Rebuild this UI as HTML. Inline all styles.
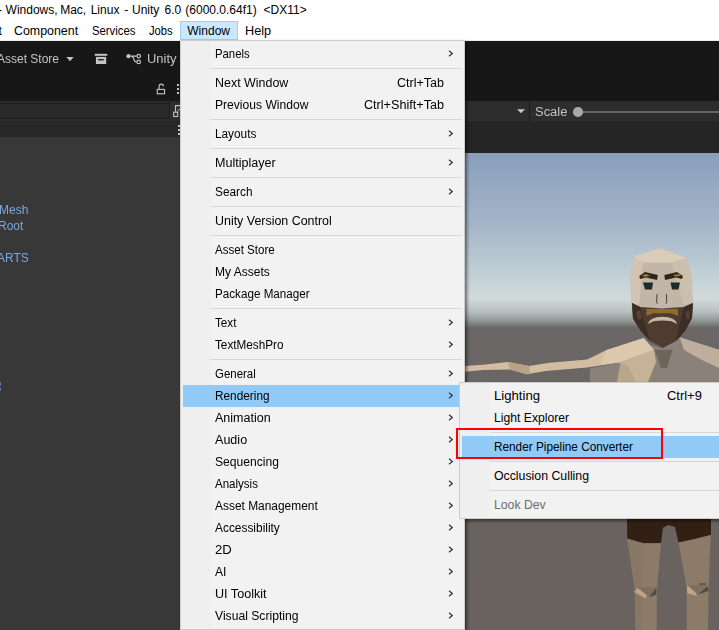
<!DOCTYPE html>
<html><head><meta charset="utf-8">
<style>
*{margin:0;padding:0;box-sizing:border-box}
html,body{width:719px;height:630px;overflow:hidden;background:#383838;font-family:"Liberation Sans",sans-serif;font-size:12px}
.a{position:absolute}
.t{position:absolute;white-space:nowrap;line-height:14px}
#title{left:0;top:0;width:719px;height:20px;background:#fff}
#mbar{left:0;top:20px;width:719px;height:21px;background:#fff;border-bottom:1px solid #ececec}
#tb{left:0;top:41px;width:719px;height:60px;background:#171717}
.menu{background:#f2f2f2;border:1px solid #cccccc;box-shadow:2px 2px 3px rgba(0,0,0,0.5)}
.it{position:absolute;height:22px;left:2px;right:2px}
.it .l{position:absolute;left:32px;top:4px;white-space:nowrap;line-height:14px;color:#000}
.it .r{position:absolute;top:4px;white-space:nowrap;line-height:14px;color:#000}
.it.hl{background:#91c9f7}
.it.dis .l{color:#6d6d6d}
.sep{position:absolute;height:1px;background:#d7d7d7}
.chev{position:absolute;right:9px;top:7px}
.ui{color:#c4c4c4;will-change:transform}
.blue{color:#7ea6dc;will-change:transform}
</style></head><body>
<div id="title" class="a">
    <div class="t" style="left:-2.0px;top:3px">-</div>
  <div class="t" style="left:5.6px;top:3px">Windows,</div>
  <div class="t" style="left:60.2px;top:3px">Mac,</div>
  <div class="t" style="left:90.7px;top:3px">Linux</div>
  <div class="t" style="left:124.2px;top:3px">-</div>
  <div class="t" style="left:132.0px;top:3px">Unity</div>
  <div class="t" style="left:164.6px;top:3px">6.0</div>
  <div class="t" style="left:185.3px;top:3px">(6000.0.64f1)</div>
  <div class="t" style="left:263.6px;top:3px">&lt;DX11&gt;</div>
</div>
<div id="mbar" class="a">
  <div class="t" style="left:-1.5px;top:4px">t</div>
  <div class="t" style="left:14.3px;top:4px;transform:scaleX(1.033);transform-origin:0 0">Component</div>
  <div class="t" style="left:92.3px;top:4px;transform:scaleX(0.942);transform-origin:0 0">Services</div>
  <div class="t" style="left:149.3px;top:4px;transform:scaleX(0.936);transform-origin:0 0">Jobs</div>
  <div class="a" style="left:180px;top:1px;width:58px;height:19px;background:#cce8ff;border:1px solid #99d1ff"></div>
  <div class="t" style="left:187.3px;top:4px">Window</div>
  <div class="t" style="left:244.7px;top:4px;transform:scaleX(1.056);transform-origin:0 0">Help</div>
</div>
<div id="tb" class="a">
  <div class="t ui" style="left:-3px;top:11px">Asset Store</div>
  <svg class="a" style="left:66px;top:16px" width="8" height="5"><path d="M0.3 0 H7.7 L4 4.3Z" fill="#c4c4c4"/></svg>
  <svg class="a" style="left:94px;top:12px" width="14" height="12">
    <rect x="0.8" y="0.8" width="12.5" height="2" fill="#c4c4c4"/>
    <rect x="1.9" y="3.9" width="10.3" height="7.1" fill="#c4c4c4"/>
    <rect x="4" y="6.1" width="5.8" height="1.3" fill="#191919"/>
  </svg>
  <svg class="a" style="left:124px;top:11px" width="18" height="13">
    <circle cx="4.5" cy="4.2" r="2.1" fill="#c4c4c4"/>
    <path d="M6.5 4.2 H12.6 M7.5 4.4 Q9.5 4.6 9.8 7 Q10.2 9.8 12.6 9.9" fill="none" stroke="#c4c4c4" stroke-width="1.2"/>
    <circle cx="14.7" cy="4.1" r="1.8" fill="none" stroke="#c4c4c4" stroke-width="1.2"/>
    <circle cx="14.7" cy="9.9" r="1.8" fill="none" stroke="#c4c4c4" stroke-width="1.2"/>
  </svg>
  <div class="t ui" style="left:147px;top:11px;transform:scaleX(1.077);transform-origin:0 0">Unity</div>
</div>
<!-- left panel -->
<svg class="a" style="left:156px;top:83px" width="10" height="12">
  <path d="M3.1 6 V3.6 Q3.1 1.1 5.3 1.1 Q7.4 1.1 7.5 3.2" fill="none" stroke="#c4c4c4" stroke-width="1.1"/>
  <rect x="1.25" y="6.4" width="7.3" height="4.4" fill="none" stroke="#c4c4c4" stroke-width="1.1"/>
</svg>
<div class="a" style="left:177px;top:84px;width:2px;height:2px;background:#c4c4c4"></div>
<div class="a" style="left:177px;top:88px;width:2px;height:2px;background:#c4c4c4"></div>
<div class="a" style="left:177px;top:92px;width:2px;height:2px;background:#c4c4c4"></div>
<div class="a" style="left:0;top:101px;width:180px;height:2px;background:#2a2a2a"></div>
<div class="a" style="left:0;top:103px;width:180px;height:1px;background:#1b1b1b"></div>
<div class="a" style="left:0;top:104px;width:169px;height:14px;background:#2a2a2a"></div>
<div class="a" style="left:169px;top:104px;width:1px;height:14px;background:#1e1e1e"></div>
<div class="a" style="left:170px;top:103px;width:10px;height:16px;background:#2e2e2e"></div>
<svg class="a" style="left:172px;top:104px" width="8" height="14">
  <rect x="1.7" y="8.2" width="4" height="4.3" fill="none" stroke="#c4c4c4" stroke-width="1.1"/>
  <path d="M3.5 7.8 V1.6 H8" fill="none" stroke="#c4c4c4" stroke-width="1.1"/>
  <path d="M5.5 7.5 L8 4.5" fill="none" stroke="#c4c4c4" stroke-width="1"/>
</svg>
<div class="a" style="left:0;top:118px;width:170px;height:1px;background:#202020"></div>
<div class="a" style="left:0;top:119px;width:180px;height:2px;background:#2c2c2c"></div>
<div class="a" style="left:0;top:121px;width:180px;height:16px;background:#282828"></div>
<div class="a" style="left:178px;top:125px;width:2px;height:2px;background:#c4c4c4"></div>
<div class="a" style="left:178px;top:129px;width:2px;height:2px;background:#c4c4c4"></div>
<div class="a" style="left:178px;top:133px;width:2px;height:2px;background:#c4c4c4"></div>
<div class="t blue" style="left:-1.3px;top:203px">Mesh</div>
<div class="t blue" style="left:-2.1px;top:219px">Root</div>
<div class="t blue" style="left:-2.8px;top:251px">ARTS</div>
<div class="a" style="left:0;top:382px;width:1px;height:4px;background:#5a78b0"></div>
<div class="a" style="left:0;top:388px;width:1px;height:3px;background:#5a78b0"></div>

<!-- scene view -->
<div class="a" style="left:465px;top:101px;width:254px;height:21px;background:#2d2d2d;border-bottom:1px solid #1b1b1b"></div>
<svg class="a" style="left:517px;top:109px" width="9" height="6"><path d="M0 0.3 H8 L4 4.3Z" fill="#c4c4c4"/></svg>
<div class="a" style="left:529px;top:101px;width:1px;height:20px;background:#1b1b1b"></div>
<div class="t ui" style="left:534.6px;top:105px;transform:scaleX(1.08);transform-origin:0 0">Scale</div>
<div class="a" style="left:578px;top:111px;width:141px;height:2px;background:#626262"></div>
<div class="a" style="left:573px;top:107px;width:9.5px;height:9.5px;border-radius:50%;background:#a8a8a8"></div>
<div class="a" style="left:465px;top:121px;width:254px;height:32px;background:#252525"></div>
<svg class="a" style="left:465px;top:153px" width="254" height="477" viewBox="465 153 254 477">
  <defs>
    <linearGradient id="sky" x1="0" y1="153" x2="0" y2="630" gradientUnits="userSpaceOnUse">
      <stop offset="0.0000" stop-color="#889fbc"/>
      <stop offset="0.1423" stop-color="#a3b4c7"/>
      <stop offset="0.2259" stop-color="#b8c8d2"/>
      <stop offset="0.2657" stop-color="#c5d2d8"/>
      <stop offset="0.3054" stop-color="#d0dad8"/>
      <stop offset="0.3326" stop-color="#b8c0c0"/>
      <stop offset="0.3515" stop-color="#909696"/>
      <stop offset="0.3630" stop-color="#747472"/>
      <stop offset="0.3661" stop-color="#6a6766"/>
      <stop offset="1.0000" stop-color="#69625e"/>
    </linearGradient>
  </defs>
  <rect x="465" y="153" width="254" height="477" fill="url(#sky)"/>
  <!-- arm -->
  <path d="M590 382 L590 368.6 L620.5 362.3 L652 345 L662 348 L679.7 337.2 L719 349.7 L719 382Z" fill="#8a8178"/>
  <path d="M465 365.9 L482.9 364.8 L507.9 362.1 L528.8 365.9 L549.6 362.7 L587.2 359.6 L606 350.2 L643.8 338 L654 350 L620.5 362.3 L587.2 367.5 L545.5 371.1 L526.7 374.2 L510 369.6 L482.9 370 L465 371.7Z" fill="#d3bda1"/>
  <path d="M507.9 362.1 L528.8 365.9 L530 373 L526.7 374.2 L510 369.6Z" fill="#b9a188"/>
  <path d="M606 350.2 L643.8 338 L654 350 L620.5 362.3 L600 365Z" fill="#dcc8ac"/>
  <path d="M620.5 362.3 L654 350 L656 362 L648 382 L625 382Z" fill="#c6b297"/>
  <path d="M617 382 L620.5 362.3 L628 366 L636 382Z" fill="#b8a58b"/>
  <path d="M654.6 349.7 L672.5 349.7 L667 368 L661 368Z" fill="#6e6458"/>
  <path d="M679.7 337.2 L719 349.7 L719 368 L702 360 L684 350Z" fill="#bfae9c"/>
  <!-- head -->
  <path d="M633.3 256.7 L659.5 248.3 L686.9 257.9 L691.7 278 L692.9 311 L632 311 L630.5 278Z" fill="#c2b7a7"/>
  <path d="M633.3 256.7 L659.5 248.3 L686.9 257.9 L671.4 262.6 L642.9 262.6Z" fill="#d9ccb9"/>
  <path d="M633.3 256.7 L642.9 262.6 L639.3 304 L632 307 L630.5 278Z" fill="#d2c4b0"/>
  <path d="M686.9 257.9 L671.4 262.6 L684 304 L692.9 307 L691.7 278Z" fill="#cbbfae"/>
  <!-- beard -->
  <path d="M632 303 L640 307 L662 308.5 L684 307 L692.9 303 L692 318 L685 331 L676 341 L662.9 348 L650 341 L640.5 330.5 L633 318.6Z" fill="#4f3b30"/>
  <path d="M632 303 L640 307 L644 322 L650 341 L640.5 330.5 L633 318.6Z" fill="#3d2d24"/>
  <path d="M692.9 303 L684 307 L680 322 L676 341 L685 331 L692 318Z" fill="#3d2d24"/>
  <path d="M636 312 L640 310 L642 318 L638 320Z" fill="#5a4236"/>
  <path d="M686 312 L689 310 L690 318 L686 319Z" fill="#554034"/>
  <path d="M646.5 309 L678 309 L678 316 L671 313.2 L653 313.2 L646.5 316Z" fill="#8d6c2c"/>
  <path d="M648 324 Q649.5 317 662.5 316.8 Q675.5 317 677 324 L671.5 321.2 Q662.5 319.8 653.5 321.2Z" fill="#c6b9a6"/>
  <!-- brows / eyes -->
  <path d="M639.3 276 L645 272 L657.9 275 L657 280 L646 277.5 L640 279Z" fill="#2e2418"/>
  <path d="M642 275 L647 274 L650 276 L644 277Z" fill="#9a7632"/>
  <path d="M664.3 275 L677 272 L682.9 276 L682 279 L676 277.5 L665 280Z" fill="#2e2418"/>
  <path d="M673 275 L679 274 L681 276 L675 276.5Z" fill="#9a7632"/>
  <path d="M643 282.5 L653 282.5 L652 289.5 L645 289.5Z" fill="#1f2a2a"/>
  <path d="M670.5 282.5 L680 282.5 L678.5 289.5 L672 289.5Z" fill="#1f2a2a"/>
  <path d="M657 294 L656.6 302.6 L658 303.6 M666.4 294 L666.8 302.6 L665.4 303.6" fill="none" stroke="#3a3430" stroke-width="0.9"/>
  <!-- shorts -->
  <path d="M627 518 L711 518 L711 535 L693 539.6 L678.5 542.4 L675 527 L668.4 525 L663 527.8 L661 543.3 L643 543.3 L627.3 538.7Z" fill="#332015"/>
  <!-- legs -->
  <path d="M627.3 538.7 L643 543.3 L661 543.3 L657 588 L656.6 630 L635.6 630 L634.6 588Z" fill="#8b7b68"/>
  <path d="M627.3 538.7 L643 543.3 L642 588 L642 630 L635.6 630 L634.6 588Z" fill="#877764"/>
  <path d="M678.5 542.4 L693 539.6 L710.8 535 L708.6 588 L708 630 L686.7 630 L686.7 588Z" fill="#8b7b68"/>
  <path d="M634.2 592 L637.4 588.1 L650 591 L645.3 598.5Z" fill="#c0a284"/>
  <path d="M637.4 587.5 L656.4 587.5 L649.2 597.2Z" fill="#7e705f"/>
  <path d="M649.2 597.2 L656.4 587.5 L656.4 594.6Z" fill="#4e4c48"/>
  <path d="M687.1 585.5 L687.1 593.3 L696.9 595.9 L694 588Z" fill="#c0a284"/>
  <path d="M687.1 585 L707.4 585 L698 594.6Z" fill="#7e705f"/>
  <path d="M698.2 594.6 L707.4 586.1 L708.7 590.7Z" fill="#4e4c48"/>
  <path d="M699 584 H706" stroke="#4a3a2c" stroke-width="1"/>
</svg>


<div class="a" style="left:459px;top:382px;width:300px;height:137px;box-shadow:2px 2px 3px rgba(0,0,0,0.5)"></div>
<!-- main menu -->
<div id="menu" class="a menu" style="left:180px;top:40px;width:285px;height:590px">
<div class="a" style="left:0;top:0;width:30px;height:100%;background:#efefef"></div>
<div class="it" style="top:2px"><span class="l" style="transform:scaleX(0.943);transform-origin:0 0">Panels</span><svg class="chev" viewBox="0 0 6 8" width="6" height="8"><path d="M2 0.8 L5.3 3.5 L2 6.3" fill="none" stroke="#333" stroke-width="1.15"/></svg></div>
<div class="sep" style="top:27px;left:30px;right:2px"></div>
<div class="it" style="top:31px"><span class="l" style="transform:scaleX(1.037);transform-origin:0 0">Next Window</span><span class="r" style="right:17.5px;transform:scaleX(1.045);transform-origin:100% 0">Ctrl+Tab</span></div>
<div class="it" style="top:53px"><span class="l" style="transform:scaleX(1.008);transform-origin:0 0">Previous Window</span><span class="r" style="right:17.5px;transform:scaleX(1.053);transform-origin:100% 0">Ctrl+Shift+Tab</span></div>
<div class="sep" style="top:78px;left:30px;right:2px"></div>
<div class="it" style="top:82px"><span class="l" style="transform:scaleX(0.983);transform-origin:0 0">Layouts</span><svg class="chev" viewBox="0 0 6 8" width="6" height="8"><path d="M2 0.8 L5.3 3.5 L2 6.3" fill="none" stroke="#333" stroke-width="1.15"/></svg></div>
<div class="sep" style="top:107px;left:30px;right:2px"></div>
<div class="it" style="top:111px"><span class="l" style="transform:scaleX(1.047);transform-origin:0 0">Multiplayer</span><svg class="chev" viewBox="0 0 6 8" width="6" height="8"><path d="M2 0.8 L5.3 3.5 L2 6.3" fill="none" stroke="#333" stroke-width="1.15"/></svg></div>
<div class="sep" style="top:136px;left:30px;right:2px"></div>
<div class="it" style="top:140px"><span class="l" style="transform:scaleX(0.986);transform-origin:0 0">Search</span><svg class="chev" viewBox="0 0 6 8" width="6" height="8"><path d="M2 0.8 L5.3 3.5 L2 6.3" fill="none" stroke="#333" stroke-width="1.15"/></svg></div>
<div class="sep" style="top:165px;left:30px;right:2px"></div>
<div class="it" style="top:169px"><span class="l" style="transform:scaleX(1.036);transform-origin:0 0">Unity Version Control</span></div>
<div class="sep" style="top:194px;left:30px;right:2px"></div>
<div class="it" style="top:198px"><span class="l" style="transform:scaleX(0.963);transform-origin:0 0">Asset Store</span></div>
<div class="it" style="top:220px"><span class="l" style="transform:scaleX(1.004);transform-origin:0 0">My Assets</span></div>
<div class="it" style="top:242px"><span class="l" style="transform:scaleX(0.972);transform-origin:0 0">Package Manager</span></div>
<div class="sep" style="top:267px;left:30px;right:2px"></div>
<div class="it" style="top:271px"><span class="l" style="transform:scaleX(0.973);transform-origin:0 0">Text</span><svg class="chev" viewBox="0 0 6 8" width="6" height="8"><path d="M2 0.8 L5.3 3.5 L2 6.3" fill="none" stroke="#333" stroke-width="1.15"/></svg></div>
<div class="it" style="top:293px"><span class="l" style="transform:scaleX(0.979);transform-origin:0 0">TextMeshPro</span><svg class="chev" viewBox="0 0 6 8" width="6" height="8"><path d="M2 0.8 L5.3 3.5 L2 6.3" fill="none" stroke="#333" stroke-width="1.15"/></svg></div>
<div class="sep" style="top:318px;left:30px;right:2px"></div>
<div class="it" style="top:322px"><span class="l" style="transform:scaleX(0.954);transform-origin:0 0">General</span><svg class="chev" viewBox="0 0 6 8" width="6" height="8"><path d="M2 0.8 L5.3 3.5 L2 6.3" fill="none" stroke="#333" stroke-width="1.15"/></svg></div>
<div class="it hl" style="top:344px"><span class="l" style="transform:scaleX(0.985);transform-origin:0 0">Rendering</span><svg class="chev" viewBox="0 0 6 8" width="6" height="8"><path d="M2 0.8 L5.3 3.5 L2 6.3" fill="none" stroke="#333" stroke-width="1.15"/></svg></div>
<div class="it" style="top:366px"><span class="l" style="transform:scaleX(1.042);transform-origin:0 0">Animation</span><svg class="chev" viewBox="0 0 6 8" width="6" height="8"><path d="M2 0.8 L5.3 3.5 L2 6.3" fill="none" stroke="#333" stroke-width="1.15"/></svg></div>
<div class="it" style="top:388px"><span class="l" style="transform:scaleX(1.047);transform-origin:0 0">Audio</span><svg class="chev" viewBox="0 0 6 8" width="6" height="8"><path d="M2 0.8 L5.3 3.5 L2 6.3" fill="none" stroke="#333" stroke-width="1.15"/></svg></div>
<div class="it" style="top:410px"><span class="l" style="transform:scaleX(1.008);transform-origin:0 0">Sequencing</span><svg class="chev" viewBox="0 0 6 8" width="6" height="8"><path d="M2 0.8 L5.3 3.5 L2 6.3" fill="none" stroke="#333" stroke-width="1.15"/></svg></div>
<div class="it" style="top:432px"><span class="l" style="transform:scaleX(0.961);transform-origin:0 0">Analysis</span><svg class="chev" viewBox="0 0 6 8" width="6" height="8"><path d="M2 0.8 L5.3 3.5 L2 6.3" fill="none" stroke="#333" stroke-width="1.15"/></svg></div>
<div class="it" style="top:454px"><span class="l" style="transform:scaleX(0.994);transform-origin:0 0">Asset Management</span><svg class="chev" viewBox="0 0 6 8" width="6" height="8"><path d="M2 0.8 L5.3 3.5 L2 6.3" fill="none" stroke="#333" stroke-width="1.15"/></svg></div>
<div class="it" style="top:476px"><span class="l" style="transform:scaleX(0.992);transform-origin:0 0">Accessibility</span><svg class="chev" viewBox="0 0 6 8" width="6" height="8"><path d="M2 0.8 L5.3 3.5 L2 6.3" fill="none" stroke="#333" stroke-width="1.15"/></svg></div>
<div class="it" style="top:498px"><span class="l" style="transform:scaleX(1.093);transform-origin:0 0">2D</span><svg class="chev" viewBox="0 0 6 8" width="6" height="8"><path d="M2 0.8 L5.3 3.5 L2 6.3" fill="none" stroke="#333" stroke-width="1.15"/></svg></div>
<div class="it" style="top:520px"><span class="l" style="transform:scaleX(1.010);transform-origin:0 0">AI</span><svg class="chev" viewBox="0 0 6 8" width="6" height="8"><path d="M2 0.8 L5.3 3.5 L2 6.3" fill="none" stroke="#333" stroke-width="1.15"/></svg></div>
<div class="it" style="top:542px"><span class="l" style="transform:scaleX(1.050);transform-origin:0 0">UI Toolkit</span><svg class="chev" viewBox="0 0 6 8" width="6" height="8"><path d="M2 0.8 L5.3 3.5 L2 6.3" fill="none" stroke="#333" stroke-width="1.15"/></svg></div>
<div class="it" style="top:564px"><span class="l" style="transform:scaleX(1.012);transform-origin:0 0">Visual Scripting</span><svg class="chev" viewBox="0 0 6 8" width="6" height="8"><path d="M2 0.8 L5.3 3.5 L2 6.3" fill="none" stroke="#333" stroke-width="1.15"/></svg></div>
</div>
<!-- submenu -->
<div id="sub" class="a menu" style="left:459px;top:382px;width:300px;height:137px;box-shadow:none">
<div class="a" style="left:0;top:0;width:30px;height:100%;background:#efefef"></div>
<div class="it" style="top:2px"><span class="l" style="transform:scaleX(1.095);transform-origin:0 0">Lighting</span><span class="r" style="left:204.5px;transform:scaleX(1.077);transform-origin:0 0">Ctrl+9</span></div>
<div class="it" style="top:24px"><span class="l" style="transform:scaleX(1.014);transform-origin:0 0">Light Explorer</span></div>
<div class="sep" style="top:49px;left:30px;right:2px"></div>
<div class="it hl" style="top:53px"><span class="l" style="transform:scaleX(0.982);transform-origin:0 0">Render Pipeline Converter</span></div>
<div class="sep" style="top:78px;left:30px;right:2px"></div>
<div class="it" style="top:82px"><span class="l" style="transform:scaleX(1.025);transform-origin:0 0">Occlusion Culling</span></div>
<div class="sep" style="top:107px;left:30px;right:2px"></div>
<div class="it dis" style="top:111px"><span class="l" style="transform:scaleX(1.018);transform-origin:0 0">Look Dev</span></div>
</div>
<div class="a" style="left:456px;top:428px;width:207px;height:31px;border:2px solid #ff0000"></div>
</body></html>
